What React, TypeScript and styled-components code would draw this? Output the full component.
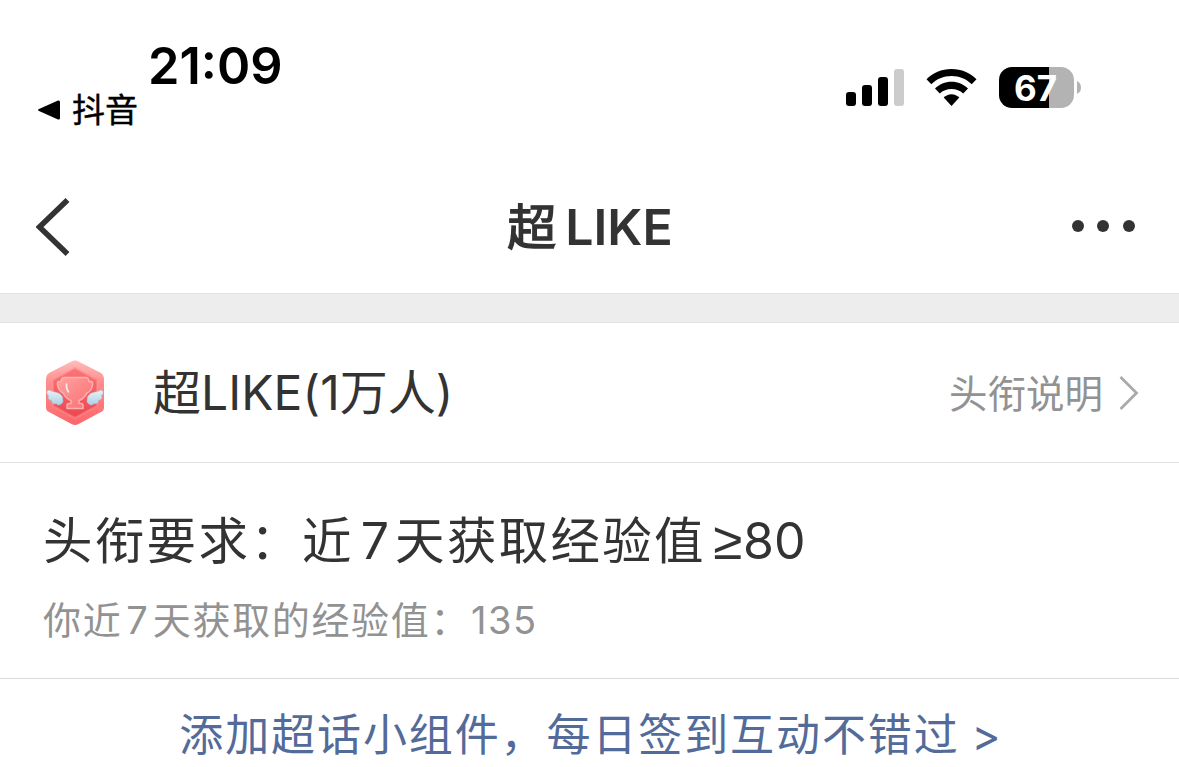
import React from "react";
import styled, { createGlobalStyle } from "styled-components";

const GlobalStyles = createGlobalStyle`
  body {
    margin: 0;
    background: #fff;
    color: #333;
    font-family: Inter, "Noto Sans CJK SC", sans-serif;
    overflow: hidden;
  }
`;

const Screen = styled.main`
  display: flex;
  flex-direction: column;
  height: 767px;
  overflow: hidden;
`;

const StatusBar = styled.header`
  display: flex;
  justify-content: space-between;
  height: 160px;
  box-sizing: border-box;
  padding: 40px 98px 0 37px;
  color: #000;
`;

const Clock = styled.div`
  padding-left: 111px;
  height: 50px;
  line-height: 51px;
  font-size: 50.5px;
  font-weight: 600;
`;

const BackToApp = styled.div`
  display: flex;
  align-items: center;
  gap: 11px;
  height: 40px;
  line-height: 41px;
  font-size: 33px;
  -webkit-text-stroke: 0.4px #000;
`;

const Indicators = styled.div`
  display: flex;
  align-items: flex-start;
  padding-top: 27px;
`;

const Signal = styled.div`
  display: flex;
  align-items: flex-end;
  gap: 6px;
  height: 37px;
  padding-top: 2px;
  margin-right: 22px;
`;

const Bar = styled.span<{ $height: number; $off?: boolean }>`
  width: 10px;
  height: ${(p) => p.$height}px;
  border-radius: 3px;
  background: ${(p) => (p.$off ? "#ccc" : "#000")};
`;

const Battery = styled.div`
  display: flex;
  align-items: center;
  gap: 3px;
  margin-left: 22px;
`;

const BatteryBody = styled.div<{ $level: number }>`
  width: 75px;
  height: 41px;
  border-radius: 13px;
  background: linear-gradient(to right, #000 ${(p) => p.$level}%, #b3b3b3 ${(p) => p.$level}%);
  color: #fff;
  font-size: 35px;
  font-weight: 700;
  line-height: 42px;
  text-align: center;
  text-indent: -2px;
`;

const NavBar = styled.nav`
  display: grid;
  grid-template-columns: 120px 1fr 120px;
  align-items: center;
  height: 133px;
`;

const BackButton = styled.button`
  display: flex;
  padding: 0 0 0 36px;
  border: 0;
  background: none;
`;

const NavTitle = styled.h1`
  display: flex;
  justify-content: center;
  margin: 0;
  padding-left: 1px;
  font-size: 50px;
  line-height: 60px;
  font-weight: 600;
`;

const TitleHan = styled.span`
  padding-top: 3px;
  font-size: 49px;
  font-weight: 400;
  -webkit-text-stroke: 1.4px #333;
`;

const TitleLatin = styled.span`
  padding: 2px 0 0 9px;
`;

const More = styled.div`
  display: flex;
  gap: 13.5px;
  padding: 0 0 1px 12.5px;
`;

const Dot = styled.span`
  width: 12px;
  height: 12px;
  border-radius: 50%;
  background: #333;
`;

const Divider = styled.div`
  height: 28px;
  background: #ededed;
  border-top: 1px solid #e2e2e2;
  border-bottom: 1px solid #e2e2e2;
`;

const BadgeRow = styled.section`
  display: flex;
  align-items: center;
  height: 139px;
  padding: 0 40px 0 45px;
  border-bottom: 1px solid #e2e2e2;
`;

const BadgeName = styled.div`
  flex: 1;
  padding-left: 48px;
  font-size: 48px;
  line-height: 60px;
`;

const Explain = styled.div`
  display: flex;
  align-items: center;
  gap: 16px;
  color: #929292;
  font-size: 38.5px;
  line-height: 50px;
`;

const ExplainText = styled.span`
  padding-top: 3px;
`;

const Requirement = styled.section`
  height: 216px;
  box-sizing: border-box;
  padding: 46px 43px 0;
  border-bottom: 1px solid #d9d9d9;
`;

const RequirementTitle = styled.h2`
  margin: 0;
  height: 64px;
  line-height: 64px;
  font-size: 49.5px;
  font-weight: 400;
  letter-spacing: 2.3px;
  white-space: nowrap;
`;

const Progress = styled.p`
  margin: 21px 0 0;
  height: 52px;
  line-height: 52px;
  font-size: 38px;
  letter-spacing: 1.65px;
  color: #929292;
  white-space: nowrap;
`;

const Latin = styled.span<{ $size: number; $left?: number; $right?: number; $spacing?: number }>`
  font-size: ${(p) => p.$size}px;
  letter-spacing: ${(p) => p.$spacing ?? 0}px;
  margin-left: ${(p) => p.$left ?? 0}px;
  margin-right: ${(p) => p.$right ?? 0}px;
`;

const AtLeast = styled.span`
  margin-left: 7px;
  font-family: "Liberation Sans", sans-serif;
  font-size: 53px;
  letter-spacing: 0;
`;

const WidgetLink = styled.a`
  padding: 24px 0 0 1px;
  text-align: center;
  font-size: 44px;
  line-height: 64px;
  letter-spacing: 1.9px;
  color: #536b99;
  white-space: nowrap;
`;

const WifiIcon = styled.svg`
  margin-top: 2px;
`;

const Wifi = () => (
  <WifiIcon width="51" height="38" viewBox="0 0 51 38">
    <path d="M25.5 0C35.5 0 44.3 3.8 50.5 10.2L45.7 15.3C40.5 10 33.5 7 25.5 7S10.5 10 5.3 15.3L.5 10.2C6.7 3.8 15.5 0 25.5 0Z" />
    <path d="M25.5 12.8C31.9 12.8 37.7 15.4 42 19.4L37.2 24.4C34.2 21.500 30.1 19.9 25.5 19.9S16.800 21.500 13.800 24.400L9 19.400C13.300 15.400 19.100 12.800 25.500 12.800Z" />
    <path d="M25.5 25.3C28.5 25.3 31.2 26.6 33.3 28.6L25.5 37L17.7 28.6C19.8 26.6 22.5 25.3 25.5 25.3Z" />
  </WifiIcon>
);

const Wing = ({ flip }: { flip?: boolean }) => (
  <path
    transform={flip ? "translate(60 0) scale(-1 1)" : undefined}
    d="M17.5 37C14 31 9 33 5 30.5C1 29.5 1 34 4 36C2 37 4 40.5 7 40.5C6 43 9 44.5 11.5 43.5C12 46 16 45 18 42Z"
    fill="url(#wing)"
    stroke="#aacfdf"
    strokeWidth=".5"
  />
);

const Trophy = () => (
  <svg width="60" height="66" viewBox="0 0 60 66">
    <defs>
      <linearGradient id="shell" x1="0" y1="0" x2="0" y2="1">
        <stop offset="0" stopColor="#ffbcba" />
        <stop offset=".35" stopColor="#fe8d8d" />
        <stop offset="1" stopColor="#fc666a" />
      </linearGradient>
      <linearGradient id="core" x1="0" y1="0" x2="0" y2="1">
        <stop offset="0" stopColor="#fa7678" />
        <stop offset="1" stopColor="#ec4650" />
      </linearGradient>
      <linearGradient id="cup" x1="0" y1="0" x2="1" y2="1">
        <stop offset="0" stopColor="#ffa3a1" />
        <stop offset="1" stopColor="#fb6d72" />
      </linearGradient>
      <linearGradient id="wing" x1="0" y1="0" x2="0" y2="1">
        <stop offset="0" stopColor="#e8f0f5" />
        <stop offset="1" stopColor="#a9d3e4" />
      </linearGradient>
    </defs>
    <path d="M26.5 1.5Q30 -.5 33.5 1.5L56 13Q59 15 59 18V47.5Q59 50.5 56 52L33.5 64Q30 66 26.5 64L4 52Q1 50.5 1 47.5V18Q1 15 4 13Z" fill="url(#shell)" />
    <path d="M30 8L52 20V46L30 58L8 46V20Z" fill="url(#core)" stroke="#ff9292" strokeOpacity=".5" strokeWidth="2" strokeLinejoin="round" />
    <Wing />
    <Wing flip />
    <path d="M19 17.5H41Q43.5 17.5 44 21.5H46Q48 21.5 47.5 25Q46.5 31 42 33Q38.5 39 34 40.5V43.5H36Q38 43.5 38 46V48.5H22V46Q22 43.5 24 43.5H26V40.5Q21 39 18 33Q13.5 31 12.5 25Q12 21.5 14 21.5H16Q16.5 17.5 19 17.5Z" fill="url(#cup)" stroke="#ffb0af" strokeWidth="1.5" strokeLinejoin="round" />
    <path d="M21.5 24Q21 29 23.5 32" fill="none" stroke="#fff" strokeOpacity=".8" strokeWidth="1.6" strokeLinecap="round" />
  </svg>
);

export default function App() {
  return (
    <Screen>
      <GlobalStyles />
      <StatusBar>
        <div>
          <Clock>21:09</Clock>
          <BackToApp>
            <svg width="24" height="22" viewBox="0 0 24 22">
              <path d="M2 10L21 1.5Q23 1 23 3V19Q23 21 21 20.5L2 12Q0 11 2 10Z" />
            </svg>
            抖音
          </BackToApp>
        </div>
        <Indicators>
          <Signal>
            <Bar $height={14} />
            <Bar $height={21} />
            <Bar $height={29} />
            <Bar $height={37} $off />
          </Signal>
          <Wifi />
          <Battery>
            <BatteryBody $level={67}>67</BatteryBody>
            <svg width="4" height="13" viewBox="0 0 4 13">
              <path d="M0 0Q4 2 4 6.5T0 13Z" fill="#b3b3b3" />
            </svg>
          </Battery>
        </Indicators>
      </StatusBar>
      <NavBar>
        <BackButton aria-label="返回">
          <svg width="36" height="58" viewBox="0 0 36 58">
            <path d="M31.5 2L3.5 29L31.5 56" fill="none" stroke="#333" strokeWidth="5.5" />
          </svg>
        </BackButton>
        <NavTitle>
          <TitleHan>超</TitleHan>
          <TitleLatin>LIKE</TitleLatin>
        </NavTitle>
        <More>
          <Dot />
          <Dot />
          <Dot />
        </More>
      </NavBar>
      <Divider />
      <BadgeRow>
        <Trophy />
        <BadgeName>
          超<Latin $size={48} $spacing={0.1}>LIKE(1</Latin>万人<Latin $size={48}>)</Latin>
        </BadgeName>
        <Explain>
          <ExplainText>头衔说明</ExplainText>
          <svg width="20" height="36" viewBox="0 0 20 36">
            <path d="M1.5 2L17.5 18L1.5 34" fill="none" stroke="#aaa" strokeWidth="2.8" />
          </svg>
        </Explain>
      </BadgeRow>
      <Requirement>
        <RequirementTitle>
          头衔要求：近<Latin $size={50} $left={7} $right={6}>7</Latin>天获取经验值<AtLeast>≥</AtLeast>
          <Latin $size={50} $left={1}>80</Latin>
        </RequirementTitle>
        <Progress>
          你近<Latin $size={38} $left={4} $right={5}>7</Latin>天获取的经验值：<Latin $size={38} $left={1} $spacing={1.5}>135</Latin>
        </Progress>
      </Requirement>
      <WidgetLink>
        添加超话小组件，每日签到互动不错过<Latin $size={44} $left={12}>&gt;</Latin>
      </WidgetLink>
    </Screen>
  );
}
